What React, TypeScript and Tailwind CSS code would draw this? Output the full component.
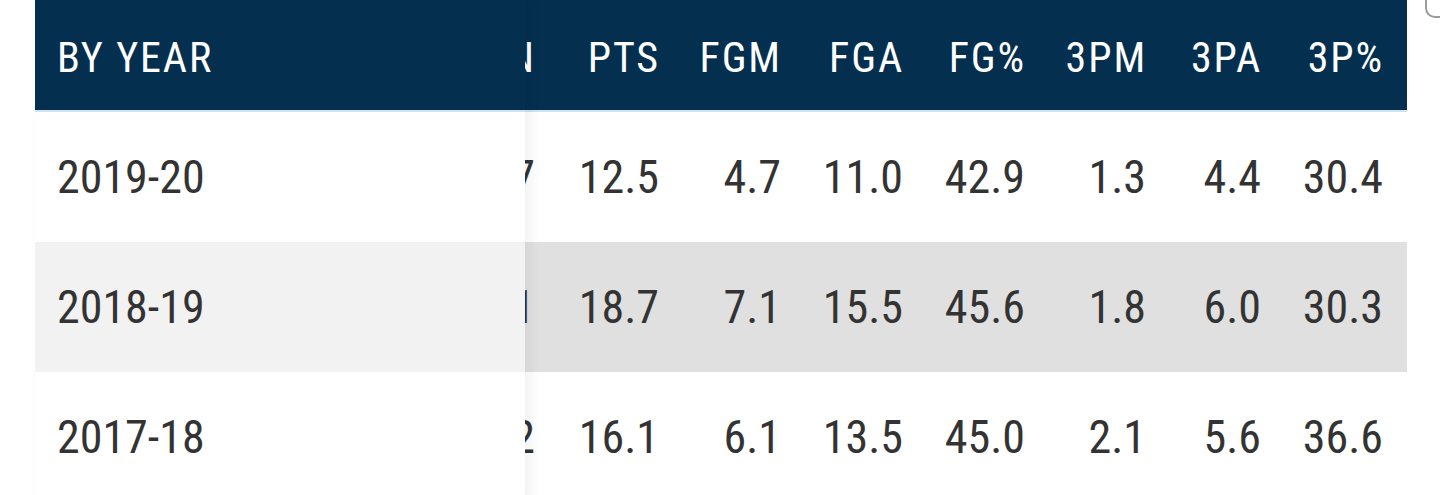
import React from "react";

const cols = [
  { key: "MIN", w: "w-[122px]" },
  { key: "PTS", w: "w-[124px]" },
  { key: "FGM", w: "w-[122px]" },
  { key: "FGA", w: "w-[122px]" },
  { key: "FG%", w: "w-[122px]" },
  { key: "3PM", w: "w-[121px]" },
  { key: "3PA", w: "w-[115px]" },
  { key: "3P%", w: "w-[122px]" },
];

const rows = [
  { year: "2019-20", vals: ["27.7", "12.5", "4.7", "11.0", "42.9", "1.3", "4.4", "30.4"] },
  { year: "2018-19", vals: ["33.1", "18.7", "7.1", "15.5", "45.6", "1.8", "6.0", "30.3"] },
  { year: "2017-18", vals: ["31.2", "16.1", "6.1", "13.5", "45.0", "2.1", "5.6", "36.6"] },
];

const font = "font-['Roboto_Condensed','DejaVu_Sans_Condensed',Roboto,sans-serif] [font-stretch:condensed]";

export default function App() {
  return (
    <div className={`w-[1440px] h-[495px] overflow-hidden bg-white flex ${font}`}>
      <div className="w-[35px] shrink-0" />
      <div className="w-[1372px] flex items-start">
        {/* STICKY COLUMN */}
        <div className="w-[490px] shrink-0 flex flex-col z-10 shadow-[5px_0_12px_rgba(0,0,0,0.06)]">
          <div className="h-[112px] shrink-0 bg-[#042f4f] border-b-2 border-[#cfe2ee] flex items-center pt-[4px] pl-[22px] text-white text-[42px] tracking-[0.045em]">
            BY YEAR
          </div>
          {rows.map((r, i) => (
            <div
              key={r.year}
              className={`h-[130px] shrink-0 flex items-center pl-[22px] text-[#333333] text-[46px] ${i === 1 ? "bg-[#f2f2f2]" : "bg-white"}`}
            >
              {r.year}
            </div>
          ))}
        </div>

        {/* SCROLLED STATS */}
        <div className="flex-1 overflow-hidden">
          <div className="ml-[-88px] flex flex-col">
            <div className="h-[112px] shrink-0 bg-[#042f4f] border-b-2 border-[#cfe2ee] flex items-center pt-[4px]">
              {cols.map((c) => (
                <div key={c.key} className={`${c.w} shrink-0 text-right pr-[23px] text-white text-[42px] tracking-[0.045em]`}>
                  {c.key}
                </div>
              ))}
            </div>
            {rows.map((r, i) => (
              <div
                key={r.year}
                className={`h-[130px] shrink-0 flex items-center ${i === 1 ? "bg-[#e0e0e0]" : "bg-white"}`}
              >
                {r.vals.map((v, j) => (
                  <div key={j} className={`${cols[j].w} shrink-0 text-right pr-[24px] text-[#333333] text-[46px]`}>
                    {v}
                  </div>
                ))}
              </div>
            ))}
          </div>
        </div>
      </div>
      <div className="flex-1 pl-[18px]">
        <div className="w-[30px] h-[22px] -mt-[4px] rounded-bl-[10px] border-l-2 border-b-2 border-[#9a9a9a]" />
      </div>
    </div>
  );
}
